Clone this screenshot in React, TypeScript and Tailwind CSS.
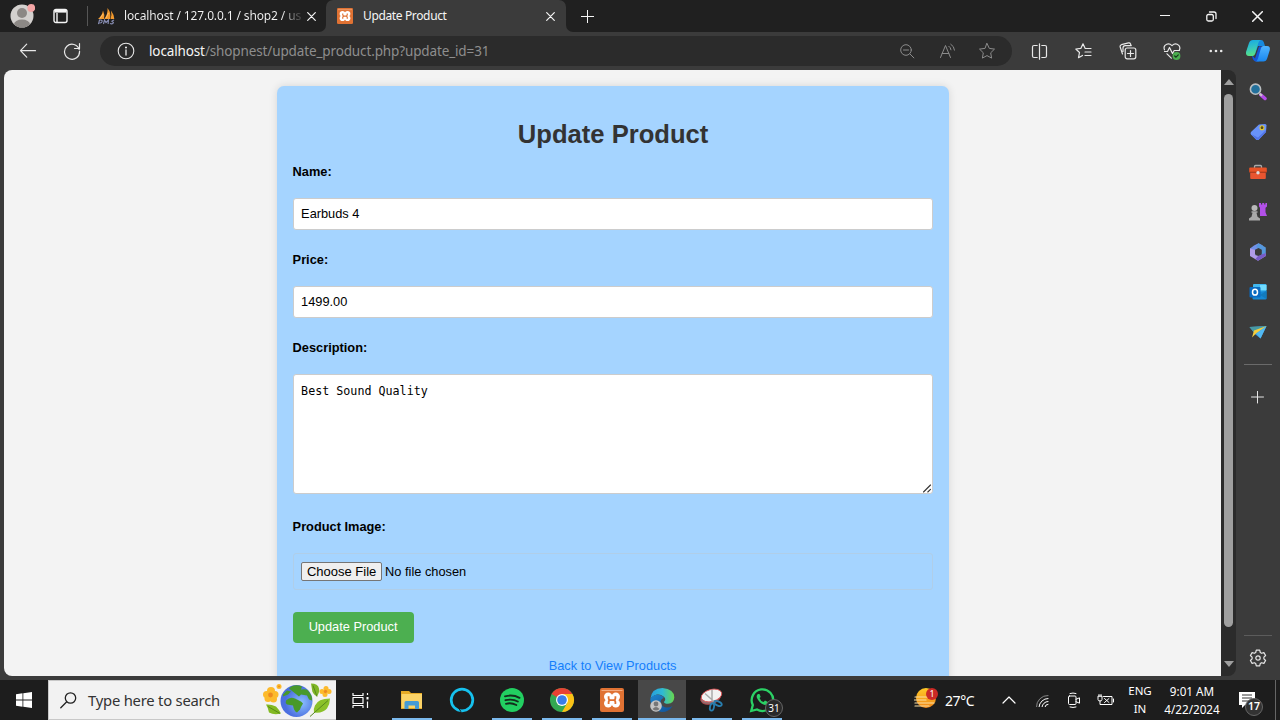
import type { ReactNode } from "react";

const stroke = { fill: "none", stroke: "currentColor", strokeLinecap: "round", strokeLinejoin: "round" } as const;

function Icon({ size = 16, sw = 1, className = "", children }: { size?: number; sw?: number; className?: string; children: ReactNode }) {
  return (
    <svg width={size} height={size} viewBox={`0 0 ${size} ${size}`} strokeWidth={sw} {...stroke} className={`block shrink-0 ${className}`}>
      {children}
    </svg>
  );
}

function XamppLogo({ size }: { size: number }) {
  return (
    <svg width={size} height={size} viewBox="0 0 24 24" className="block shrink-0">
      <rect width="24" height="24" rx="2" fill="#e07233" />
      <path d="M1.500 2.500h21" stroke="#f3ab80" strokeWidth="1" />
      <g fill="#fff">
        <circle cx="8.200" cy="8.800" r="4.200" />
        <circle cx="15.800" cy="8.800" r="4.200" />
        <circle cx="8.200" cy="15.400" r="4.200" />
        <circle cx="15.800" cy="15.400" r="4.200" />
        <rect x="7" y="7.500" width="10" height="9.200" />
      </g>
      <path d="M8.600 8.300v1.600q0 2.200 2 2.200h2.800q2 0 2-2.200V8.300M8.600 16v-1.700q0-2.200 2-2.200h2.800q2 0 2 2.200V16" fill="none" stroke="#e07233" strokeWidth="1.800" />
    </svg>
  );
}

function Close({ size = 9, sw = 1.2 }: { size?: number; sw?: number }) {
  return (
    <Icon size={size} sw={sw}>
      <path d={`M.7.7l${size - 1.4} ${size - 1.4}M${size - 0.7}.7L.7 ${size - 0.7}`} />
    </Icon>
  );
}

function TabBar() {
  return (
    <header className="flex h-8 shrink-0 bg-[#3b3b3b] text-[#f5f5f5]">
      <div className="flex w-[326px] items-center rounded-br-[7px] bg-[#202020]">
        <div className="flex w-11 justify-center">
          <svg width="26" height="26" viewBox="0 0 26 26" className="block">
            <defs><clipPath id="av"><circle cx="13" cy="13" r="11.500" /></clipPath></defs>
            <g clipPath="url(#av)">
              <rect width="26" height="26" fill="#d3d0ce" />
              <circle cx="13" cy="10" r="5" fill="#8c8885" />
              <ellipse cx="13" cy="21.500" rx="8" ry="5" fill="#8c8885" />
            </g>
            <circle cx="22.300" cy="5" r="3.900" fill="#f4a5a5" />
          </svg>
        </div>
        <div className="flex w-[33px] justify-center">
          <Icon size={16} sw={1.4}>
            <rect x="1" y="1.500" width="13" height="13" rx="2" />
            <path d="M1.500 3.300h12" strokeWidth="2.600" strokeLinecap="butt" /><path d="M4 5v9" strokeWidth="1.400" strokeLinecap="butt" />
          </Icon>
        </div>
        <div className="ml-2.5 h-5 w-px bg-[#565656]" />
        <svg width="17" height="17" viewBox="0 0 17 17" className="ml-2.5 block shrink-0">
          <path d="M0 11Q4 8 5 2.500q2 4 1 8.500zM6.300 11Q10 6 9.500 0q4 5 2.500 11zM12.500 11q1.500-4 .5-8.500 3 4 3.300 8.500z" fill="#f39a2d" />
          <path d="M2 10.500L5 6M8 10l2.500-5" stroke="#ffd08a" strokeWidth=".7" />
          <path d="M.5 16l1-4q3-.3 2.600 1.500T1.500 15M5.500 16l1-4 1.500 2.500L10.500 12l-.4 4M12 15.500q2 .8 3-.2t-.6-1.500T16 12" fill="none" stroke="#8b91b8" strokeWidth="1.100" />
        </svg>
        <div className="ml-[9px] w-[178px] shrink-0 bg-linear-to-r from-[#f5f5f5] from-89% to-[#505050] to-98% bg-clip-text text-[12px] tracking-[-0.130px] whitespace-nowrap text-transparent">
          localhost / 127.0.0.1 / shop2 / us
        </div>
        <div className="ml-[5px]"><Close /></div>
      </div>
      <div className="w-60 bg-linear-to-b from-[#202020] from-50% to-[#3b3b3b] to-50%">
        <div className="flex h-full items-center rounded-t-[7px] bg-[#3b3b3b] pl-[11px]">
          <XamppLogo size={16} />
          <div className="ml-[10px] w-[183px] text-[12px] tracking-[-0.360px] whitespace-nowrap">Update Product</div>
          <Close />
        </div>
      </div>
      <div className="flex flex-1 items-center rounded-bl-[7px] bg-[#202020] pl-[15px]">
        <Icon size={13}><path d="M6.500 0v13M0 6.500h13" /></Icon>
        <div className="ml-auto flex items-center">
          <div className="flex w-[46px] justify-center"><Icon size={10}><path d="M0 4.500h10" /></Icon></div>
          <div className="flex w-[46px] justify-center">
            <Icon size={11} sw={1.300}><rect x=".8" y="3.500" width="6.500" height="6.500" rx="1.500" /><path d="M3.500 1H8q2 0 2 2v4.500" /></Icon>
          </div>
          <div className="flex w-[46px] justify-center"><Close size={11} sw={1.500} /></div>
        </div>
      </div>
    </header>
  );
}

function Toolbar() {
  return (
    <div className="flex h-[38px] shrink-0 items-center bg-[#3b3b3b] text-[#e8e8e8]">
      <Icon size={18} sw={1.200} className="ml-[19px]"><path d="M16.500 8.700H1.700M7.700 2.200L1.500 8.700 7.700 15.200" /></Icon>
      <Icon size={18} sw={1.200} className="ml-[26px]"><path d="M16.200 7.500A7.500 7.500 0 1 0 16.500 9M16.500 1.500v5h-5" /></Icon>
      <div className="ml-[19px] flex h-[30px] w-[912px] shrink-0 items-center rounded-full bg-[#2b2b2b] pl-[17px]">
        <Icon size={18} sw={1.100}><circle cx="9" cy="9" r="7.800" /><path d="M9 8v5" strokeWidth="1.300" /><circle cx="9" cy="5.500" r=".5" fill="currentColor" /></Icon>
        <div className="ml-[14px] w-[738px] shrink-0 text-[13.500px] tracking-[-0.130px] whitespace-nowrap text-[#8e8e8e]">
          <span className="text-[#f5f5f5]">localhost</span>/shopnest/update_product.php?update_id=31
        </div>
        <div className="flex items-center text-[#8b8b8b]">
          <div className="flex w-10 justify-center"><Icon size={15}><circle cx="6" cy="6" r="5.300" /><path d="M3.500 6h5M9.900 9.900l4 4" /></Icon></div>
          <div className="flex w-10 justify-center">
            <Icon size={17}><path d="M1.500 14.500L6.500 2.500l5 12M3.200 10.500h6.600M9.800 3.200q2 1.300 2.200 3.600M11.800 1.200q3.400 2 3.700 5.900" /></Icon>
          </div>
          <div className="flex w-10 justify-center"><Icon size={18}><path d="M9 1.500l2.300 4.900 5.200.7-3.800 3.700.9 5.300L9 13.600l-4.600 2.500.9-5.300L1.500 7.100l5.200-.7z" /></Icon></div>
        </div>
      </div>
      <div className="ml-[17px] flex flex-1 items-center">
        <div className="flex w-5 justify-center"><Icon size={17} sw={1.200}><path d="M6.200 2.500H3Q1.500 2.500 1.500 4v9q0 1.500 1.500 1.500h3.200M10.800 2.500H14q1.500 0 1.500 1.500v9q0 1.500-1.500 1.500h-3.200M8.500.8v15.400" /></Icon></div>
        <div className="ml-6 flex w-5 justify-center"><Icon size={18} sw={1.200}><path d="M11.200 6.500L9 1.800 6.800 6.400 1.800 7l3.700 3.500-1 5.200 4-2.300M11.200 6.500h5.800M11 10h6M11 13.500h6" /></Icon></div>
        <div className="ml-[25px] flex w-5 justify-center"><Icon size={18} sw={1.200}><rect x="6.200" y="6" width="10.600" height="10.800" rx="2" /><path d="M11.500 8.500v6M8.500 11.500h6M3.500 12L1.200 5q-.4-1.800 1.200-2.300L9.500.9q1.500-.3 2 1L12 3.500M4 9.500V6q0-2.400 2.300-2.400h6" /></Icon></div>
        <div className="ml-6 flex w-5 justify-center">
          <Icon size={18} sw={1.200}>
            <path d="M1.500 7.800Q.4 5.300 2 3.400q3.500-3 7 .2 3.500-3.200 6.800-.2 1.800 2 .6 4.400M1.500 9.500h3l2-4 3 6 1.700-3h5.300M4 11.800l4.300 4.400" />
            <circle cx="13.500" cy="14" r="3.900" fill="#4bae4f" stroke="none" /><path d="M11.700 14l1.300 1.200 2.300-2.300" stroke="#12351a" />
          </Icon>
        </div>
        <div className="ml-6 flex w-5 justify-center"><Icon size={14}><g fill="currentColor" stroke="none"><circle cx="1.800" cy="7" r="1.300" /><circle cx="7" cy="7" r="1.300" /><circle cx="12.200" cy="7" r="1.300" /></g></Icon></div>
        <svg width="26" height="24" viewBox="0 0 26 24" className="ml-[19px] block shrink-0">
          <defs>
            <linearGradient id="cp1" x1="0" y1="0" x2="0.200" y2="1"><stop stopColor="#16a7e8" /><stop offset=".55" stopColor="#35c6c0" /><stop offset="1" stopColor="#58e184" /></linearGradient>
            <linearGradient id="cp2" x1="0" y1="0" x2="0" y2="1"><stop stopColor="#4fb4ff" /><stop offset="1" stopColor="#1987ef" /></linearGradient>
          </defs>
          <path d="M9 1h7q2 0 2.700 2l1.300 4h-7l-3 8-3 2z" fill="#178adf" />
          <path d="M7 16q.5 6 4 6.500h3q2-.5 3-4l3-11h-6l-4 12z" fill="#1455d8" />
          <path d="M8 1h8q-2 .5-2.700 3L10 15q-.6 2-2.500 2H4q-3.500 0-3-4L4 4q1-3 4-3z" fill="url(#cp1)" />
          <path d="M18.500 7H22q3.500 0 2.800 4l-2.500 8q-1 3.500-4 3.500H10q2.500-.5 3-3L16 9q.6-2 2.500-2z" fill="url(#cp2)" />
        </svg>
      </div>
    </div>
  );
}

function Field({ label, children }: { label: string; children: ReactNode }) {
  return (
    <div>
      <div className="h-[15px] text-[12.800px] leading-[15px] font-bold">{label}</div>
      {children}
    </div>
  );
}

function ProductForm() {
  return (
    <main className="h-[606px] w-[1217px] overflow-hidden rounded-l-lg bg-[#f3f3f3] pt-4 font-['Liberation_Sans',sans-serif] text-black">
      <div className="ml-[273px] h-[640px] w-[672px] rounded-[7px] bg-[#a5d4ff] pt-[34px] pr-[16.400px] pl-[15.600px] text-[12.800px] shadow-[0_0_8px_rgba(0,0,0,0.12)]">
        <h1 className="h-[44px] pl-px text-center text-[25.600px] leading-[29px] font-bold text-[#333]">Update Product</h1>
        <Field label="Name:">
          <div className="mt-[19px] mb-[22px] flex h-8 items-center rounded-[3px] border border-[#ccc] bg-white px-[7.500px]">Earbuds 4</div>
        </Field>
        <Field label="Price:">
          <div className="mt-[19px] mb-[22px] flex h-8 items-center rounded-[3px] border border-[#ccc] bg-white px-[7.500px] pb-px">1499.00</div>
        </Field>
        <Field label="Description:">
          <div className="mt-[19px] mb-[25px] flex h-[120px] rounded-[3px] border border-[#ccc] bg-white pt-[9px] pl-[7.500px] font-['DejaVu_Sans_Mono',monospace] text-[11.700px] leading-[15px]">
            <div className="flex-1">Best Sound Quality</div>
            <Icon size={9} sw={1.100} className="self-end text-[#333]"><path d="M.5 8L7.500 1M4.800 8L7.500 5.300" /></Icon>
          </div>
        </Field>
        <Field label="Product Image:">
          <div className="mt-[19px] mb-[22px] flex h-[37px] items-center rounded-[3px] border border-[#b0cee8] px-[7.500px]">
            <div className="flex h-[19px] w-[81px] items-center justify-center rounded-[2px] border border-[#767676] bg-[#efefef] text-[13px] whitespace-nowrap">Choose File</div>
            <span className="ml-[3px]">No file chosen</span>
          </div>
        </Field>
        <div className="flex h-[31px] w-[121px] items-center justify-center rounded bg-[#4caf50] pb-px text-white">Update Product</div>
        <div className="mt-[15px] text-center leading-[15px] text-[#157efb]">Back to View Products</div>
      </div>
    </main>
  );
}

function Scrollbar() {
  return (
    <div className="flex h-[606px] w-[15px] shrink-0 flex-col items-center rounded-r-lg bg-[#2b2b2b]">
      <svg width="10" height="6" className="mt-[9px] block shrink-0"><path d="M0 6L5 0l5 6z" fill="#9f9f9f" /></svg>
      <div className="mt-[9px] h-[533px] w-[9px] rounded-full bg-[#9f9f9f]" />
      <svg width="10" height="6" className="mt-[34px] block shrink-0"><path d="M0 0h10L5 6z" fill="#9f9f9f" /></svg>
    </div>
  );
}

const sideIcons: ReactNode[] = [
  <><path d="M12 12l4 3.500" stroke="#b54ceb" strokeWidth="3.500" strokeLinecap="round" /><path d="M10.500 10.500l2.500 2.300" stroke="#c9c9c9" strokeWidth="2" /><circle cx="6.500" cy="6.200" r="5.100" fill="#23709b" stroke="#b9bec1" strokeWidth="1.600" /></>,
  <><path d="M10 1.500l6-.500q1.500 0 1.500 1.500L17 9l-7 7.500q-1.500 1-3 0l-5-5q-1-1.400 0-2.500z" fill="#6892fa" /><path d="M2 11l5 5.300q1.500 1 3 0l7-7.300V7L9 14.500z" fill="#5275e8" /><circle cx="13" cy="4.800" r="2" fill="#594d13" stroke="#e5c92f" strokeWidth="1.100" /></>,
  <><path d="M5.500 5V3.500q0-1 1-1h5q1 0 1 1V5" fill="none" stroke="#aaa" strokeWidth="1.300" /><rect x=".2" y="4.500" width="17.600" height="5" rx="1" fill="#e85327" /><rect x="1.200" y="9.500" width="15.600" height="6.500" rx="1" fill="#e85530" /><path d="M.5 9.200h17" stroke="#a83719" /><circle cx="9" cy="9.700" r="1.700" fill="#ddd" /></>,
  <><circle cx="5.500" cy="5" r="3" fill="#b8b8b8" /><path d="M2.500 8.200h6v1.500H7.500l1 4L11 15.500V17.500H0v-2l2.500-1.800 1-4h-1z" fill="#a9a9a9" /><path d="M10 0h2v1.500h1.200V0h2v1.500h1.200V0H18v3.500l-1.500 1.300v4.500L18 13h-7V4.800L10 3.500z" fill="#b250e8" /></>,
  <><path d="M5 2.500L9.500.3 14 2.500 8 6.500 6 13.500 1 11.500V5.500z" fill="#7290e8" /><path d="M9.500.3l7.300 4.200v7.500L12 11.500V7.500L7 4z" fill="#5698dc" /><path d="M1 5.500L6 7v5l4 1 6.800-2.500V13L9 17.800 1 13z" fill="#b09be8" /><path d="M6 6.800l3.500-1.800 3.300 1.800v4L9.500 12.700 6 11z" fill="#3b3b3b" /><path d="M9 13l7.800-3V13L9 17.800 6.500 16z" fill="#775bc6" /></>,
  <><rect x="4" y="1" width="13.500" height="8" rx="1" fill="#42b8ef" /><path d="M11 2h6.500v5H11z" fill="#71dcff" /><path d="M3.500 9l14-1v7.500q0 1-1 1h-12q-1 0-1-1z" fill="#1688d4" /><path d="M11 12l6.500-4v8z" fill="#127bbd" /><rect x=".5" y="4" width="11" height="10.500" rx="1" fill="#096bc1" /><ellipse cx="6" cy="9.200" rx="2.500" ry="2.900" fill="none" stroke="#fff" strokeWidth="1.500" /></>,
  <><path d="M.5 4l17-1-6 12.500-5-4z" fill="#42a2df" /><path d="M.5 4l17-1L5 9z" fill="#489aa3" /><path d="M17.500 3L5 7.500 3 14.500 7 10.500z" fill="#f5ce3e" /><path d="M17.500 3L7.500 10.500l4 5z" fill="#51b9f3" /></>,
];

function Sidebar() {
  return (
    <aside className="flex w-[43px] flex-col items-center text-[#e5e5e5]">
      <div className="mt-[2px] flex flex-col">
        {sideIcons.map((icon, i) => (
          <div key={i} className="flex h-10 items-center"><svg width="18" height="18" viewBox="0 0 18 18" className="block">{icon}</svg></div>
        ))}
      </div>
      <div className="mt-[12px] h-px w-7 bg-[#6a6a6a]" />
      <Icon size={13} className="mt-[26px]"><path d="M6.500 0v12M.5 6h12" /></Icon>
      <div className="mt-[231px] h-px w-7 bg-[#5c5c5c]" />
      <Icon size={18} sw={1.200} className="mt-[13px]">
        <path d="M7.300 1.200h3.400l.6 2.300 1.300.8 2.300-.7 1.700 2.900L14.900 8.200v1.600l1.700 1.700-1.700 2.900-2.300-.7-1.300.8-.6 2.300H7.300l-.6-2.300-1.300-.8-2.300.7-1.700-2.900 1.700-1.700V8.200L1.400 6.500l1.700-2.900 2.300.7 1.300-.8z" />
        <circle cx="9" cy="9" r="2.200" />
      </Icon>
    </aside>
  );
}

const apps: { name: string; open: boolean; art: ReactNode }[] = [
  { name: "files", open: true, art: <><path d="M1 3h8l2 2h11v16H1z" fill="#e6aa26" /><path d="M1.500 6H22v14H1.500z" fill="#fbd367" /><path d="M4.500 21v-6.500q0-1.500 1.500-1.500h11.500q1.500 0 1.500 1.500V21h-4v-3.500H8.500V21z" fill="#459bd5" /></> },
  { name: "assistant", open: false, art: <><circle cx="12" cy="12" r="10.800" fill="none" stroke="#16c1ee" strokeWidth="2.700" /><path d="M9 20.500l2 3.300" stroke="#1d1d1d" strokeWidth="1" /></> },
  { name: "music", open: true, art: <><circle cx="12" cy="12" r="12" fill="#22cf61" /><path d="M5 8.300q8-2 14.500 1.500M5.500 12.200q7-1.700 12.300 1.300M6 15.800q5.500-1.400 10.300 1.200" fill="none" stroke="#142d1d" strokeWidth="1.900" strokeLinecap="round" /></> },
  { name: "chrome", open: true, art: <><circle cx="12" cy="12" r="12" fill="#33a853" /><path d="M12 12L1.600 6A12 12 0 0 1 22.400 6z" fill="#e84133" /><path d="M22.400 6A12 12 0 0 1 12 24l5.200-9L12 6z" fill="#fbc116" /><circle cx="12" cy="12" r="6" fill="#fff" /><circle cx="12" cy="12" r="4.800" fill="#397de9" /></> },
  { name: "xampp", open: true, art: <XamppLogo size={24} /> },
  { name: "edge", open: true, art: <><defs><linearGradient id="eg" x1="0" x2="1"><stop stopColor="#279edd" /><stop offset=".5" stopColor="#2eb9d5" /><stop offset="1" stopColor="#68d84c" /></linearGradient><linearGradient id="eb" x1="0" y1="0" x2="1" y2="1"><stop stopColor="#1d86cf" /><stop offset="1" stopColor="#124f94" /></linearGradient></defs><path d="M.3 11Q1.500.1 12.500 0 24.300 1 24.300 9.500 23.800 15.500 18 15.800 14 15.800 14 14 16 12.500 15 10 12 6 7 6.500 2 8 .3 11z" fill="url(#eg)" /><path d="M.3 11Q3 6.500 8.500 6.800 13 7.500 13.700 10 10.300 11 10.700 14.500 12 19.500 17 19.500 20 19.500 22.500 18 19 24 12 24 1 23 .3 11z" fill="url(#eb)" /><circle cx="6" cy="18" r="5.800" fill="#c4c4c4" /><circle cx="6" cy="16" r="2.400" fill="#777" /><path d="M2.500 21q3.500-4 7 0-3.500 3-7 0z" fill="#777" /></> },
  { name: "snip", open: true, art: <><ellipse cx="10.500" cy="10" rx="10" ry="6" transform="rotate(-15 10.500 10)" fill="#8d7173" stroke="#b34349" strokeWidth=".9" /><ellipse cx="11.500" cy="7.500" rx="10.500" ry="6" transform="rotate(-15 11.500 7.500)" fill="#f2f2f2" stroke="#dc5557" strokeWidth=".9" /><path d="M12 1.500v12M5 5.500l9.500 8.500" stroke="#aaa" strokeWidth="1.500" /><ellipse cx="12" cy="19" rx="2" ry="3.700" transform="rotate(12 12 19)" fill="none" stroke="#287eaf" strokeWidth="1.800" /><ellipse cx="18" cy="15.500" rx="4" ry="2" transform="rotate(25 18 15.500)" fill="none" stroke="#287eaf" strokeWidth="1.800" /></> },
  { name: "chat", open: true, art: <><path d="M1.200 23l1.600-6A10.800 10.800 0 1 1 7 21.500z" fill="none" stroke="#2bd165" strokeWidth="2.300" /><path d="M8 6q-2 1.500-1 4 2.500 5.500 8 7 2.500 0 3-2v-1l-3-1.500-1.500 1.500q-3-1-4-4L10.700 9 9.500 6z" fill="#2bd165" /></> },
];

function Taskbar() {
  return (
    <footer className="flex h-10 shrink-0 items-stretch bg-[#1d1d1d] text-white">
      <div className="flex w-12 items-center justify-center">
        <svg width="16" height="16" viewBox="0 0 16 16"><path d="M0 2.200L6.500 1.300v6.300H0zM7.300 1.200L16 0v7.600H7.300zM0 8.400h6.500v6.300L0 13.800zM7.300 8.400H16V16l-8.700-1.200z" fill="#fff" /></svg>
      </div>
      <div className="flex w-72 items-center border border-r-0 border-[#c8c8c8] bg-[#f2f2f2] pl-[11px] text-[#333]">
        <Icon size={17} sw={1.300} className="text-[#222]"><circle cx="10.500" cy="6" r="5.200" /><path d="M6.500 10L.8 15.700" /></Icon>
        <div className="ml-[11px] w-[174px] pt-px text-[14.800px] tracking-[-0.220px] whitespace-nowrap">Type here to search</div>
        <svg width="70" height="36" viewBox="0 1.500 70 36" className="ml-px block">
          <defs><radialGradient id="earth" cx=".65" cy=".55"><stop stopColor="#8cc0ff" /><stop offset="1" stopColor="#4b6fe0" /></radialGradient></defs>
          <g fill="#fcba2c"><circle cx="8" cy="10.500" r="4" /><circle cx="3.500" cy="14" r="3.500" /><circle cx="12" cy="14" r="3.500" /><circle cx="5" cy="18" r="3.500" /><circle cx="10.500" cy="18.500" r="3.500" /><circle cx="16" cy="6" r="2.500" /><circle cx="63" cy="8" r="2.500" /><circle cx="59" cy="11" r="2.500" /><circle cx="66" cy="11" r="2.500" /><circle cx="62" cy="14" r="2.500" /></g>
          <g fill="#ed8b20"><circle cx="7.500" cy="14.500" r="2.400" /><circle cx="16" cy="6" r="1" /><circle cx="62.500" cy="11" r="1.700" /></g>
          <path d="M3 24q5-.5 10 2 3 3 5 7-7 2-12-1-1-5-3-8z" fill="#83ba23" /><path d="M5 26l12 7" stroke="#4c7d16" strokeWidth=".8" />
          <path d="M48 3q7 0 8 5 1 3-2 8-5-3-5-7z" fill="#7eb526" /><path d="M50 5l4 11" stroke="#4c7d16" strokeWidth=".8" />
          <path d="M67 18q-12 0-15 7-2 4-1 7 9 1 13-4 3-5 3-10z" fill="#8bc129" /><path d="M65 20L47 36" stroke="#58891d" strokeWidth="1" />
          <circle cx="33.500" cy="20.500" r="16" fill="url(#earth)" />
          <path d="M26 8q4-4 10-3l3 1-1 3q5-1 7 1 5 6 4 10l-3-1-2-4-6-1-2 2zM20 14l4-4 4 1-3 3-5 2zM23 20q4-4 9-2l6 3 2 2q-2 3-3 6l-3 3q-3-1-4-7l-6-1q-2-2-1-4z" fill="#48992b" />
        </svg>
      </div>
      <div className="flex w-12 items-center justify-center">
        <Icon size={17} sw={1.200}><path d="M1 1v2.500h10V1M1 16v-2.500h10V16M1 5.500h10v6H1zM15.500 1v2M15.500 9.500V16" strokeLinecap="butt" /><path d="M15.500 5v2.500" strokeWidth="2" strokeLinecap="butt" /></Icon>
      </div>
      <div className="ml-[3px] flex w-[400px]">
        {apps.map((a) => (
          <div key={a.name} className="flex w-[50px] shrink-0 justify-center">
            <div className={a.name === "edge" ? "relative flex h-10 w-12 flex-col items-center bg-[#484848]" : "relative flex h-10 w-12 flex-col items-center"}>
              <svg width="24" height="24" viewBox="0 0 24 24" className="mt-2 mr-px block shrink-0 overflow-visible">{a.art}</svg>
              {a.open && <div className={a.name === "edge" ? "mt-auto h-0.5 w-12 bg-[#7bb9ed]" : "mt-auto h-0.5 w-10 bg-[#7bb9ed]"} />}
              {a.name === "chat" && <div className="absolute top-[19px] left-[27px] flex size-[18px] items-center justify-center rounded-full border border-[#666] bg-[#292929] text-[10px]">31</div>}
            </div>
          </div>
        ))}
      </div>
      <div className="ml-[127px] flex items-center">
        <div className="relative">
          <svg width="25" height="24" viewBox="0 0 25 24" className="block"><defs><linearGradient id="sun" x2="0" y2="1"><stop stopColor="#ffc927" /><stop offset="1" stopColor="#ef8618" /></linearGradient></defs><circle cx="12" cy="10" r="10" fill="url(#sun)" /><path d="M1 9h14M0 12h12M1 15h19M1 18h14" stroke="#fce0a4" strokeWidth="1.200" strokeLinecap="round" /></svg>
          <div className="absolute top-0 left-3 flex size-[12px] items-center justify-center rounded-full bg-[#cb2a25] text-[9px]">1</div>
        </div>
        <div className="ml-[6px] w-[30px] pt-px text-[14px] tracking-[-0.400px] whitespace-nowrap">27°C</div>
        <Icon size={14} sw={1.200} className="ml-[27px]"><path d="M1 10l6-6 6 6" /></Icon>
        <Icon size={14} className="ml-[19px]"><path d="M1.500 14A11 11 0 0 1 13 2.500" stroke="#888" /><path d="M4 14A9 9 0 0 1 13 5.500M7 14a6 6 0 0 1 6-5.500" /><path d="M10 14a3 3 0 0 1 3-2.700" /></Icon>
        <Icon size={16} className="ml-[17px]"><rect x="2.500" y="4" width="7.500" height="8.500" rx="1" /><path d="M10 7.300l3.500-1.500v5.400L10 9.700M4 1.500q3-1 6 0M4 15q3 1 6 0" /></Icon>
        <Icon size={17} className="ml-[15px]"><path d="M6.500 4.500H15v8H6M16.500 7v3M7.500 6.500l4.500 4M12 6.500l-4.500 4M1 4.500v3q0 1.500 2 1.500T5 7.500v-3zM2 4.500V2.500M4 4.500V2.500M3 9v3.500h3" /></Icon>
        <div className="ml-[12px] w-[28px] text-center text-[11.500px] leading-[18px] whitespace-nowrap">ENG<br />IN</div>
        <div className="ml-[8px] w-[60px] text-center text-[11.700px] leading-[18px] whitespace-nowrap">9:01 AM<br />4/22/2024</div>
        <div className="relative ml-[17px]">
          <svg width="18" height="18" viewBox="0 0 18 18" className="block"><path d="M0 1h16v13H6l-3 3v-3H0z" fill="#fff" /><path d="M3 4h10M3 7h10M3 10h7" stroke="#333" /></svg>
          <div className="absolute top-[7px] left-[6px] flex size-[18px] items-center justify-center rounded-full border border-[#666] bg-[#333] text-[10.500px] font-semibold">17</div>
        </div>
        <div className="ml-[18px] h-10 w-px bg-[#666]" />
      </div>
    </footer>
  );
}

export default function App() {
  return (
    <div className="flex h-[720px] w-[1280px] flex-col overflow-hidden bg-[#3b3b3b] font-['Noto_Sans',sans-serif]">
      <TabBar />
      <Toolbar />
      <div className="flex h-[610px] shrink-0 pl-1">
        <div className="flex w-[1232px] shrink-0">
          <ProductForm />
          <Scrollbar />
        </div>
        <Sidebar />
      </div>
      <Taskbar />
    </div>
  );
}
